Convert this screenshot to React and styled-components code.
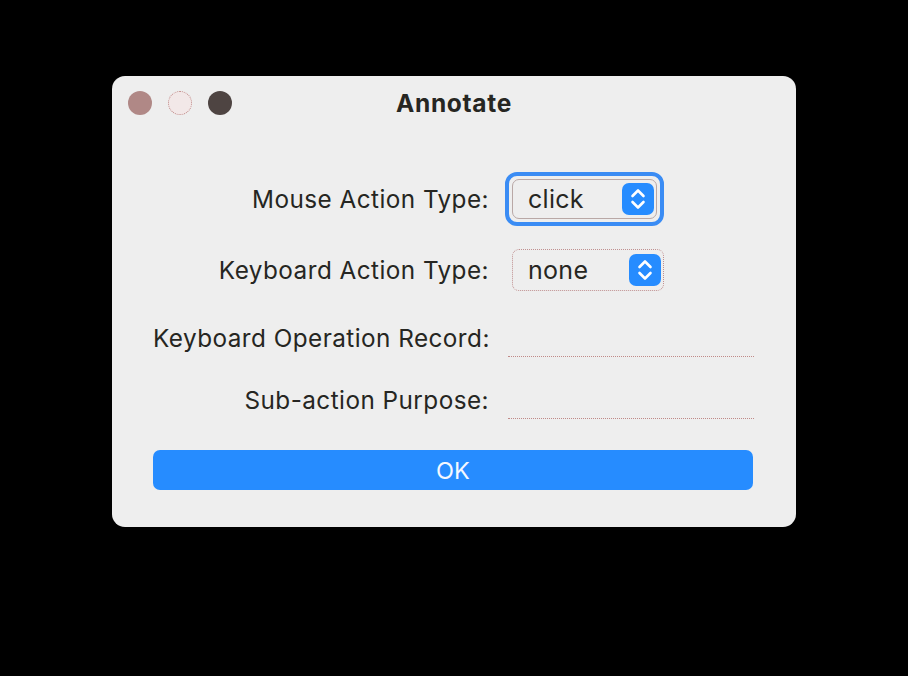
import React from 'react'
import styled, { createGlobalStyle } from 'styled-components'

const Global = createGlobalStyle`
  html, body { margin: 0; background: #000; }
  body { font-family: Inter, "Noto Sans", sans-serif; }
`

const Page = styled.div`
  width: 908px;
  height: 676px;
  padding: 76px 0 0 112px;
  box-sizing: border-box;
`

const Window = styled.div`
  width: 684px;
  height: 451px;
  background: #eeeeee;
  border-radius: 13px;
  box-sizing: border-box;
`

const TitleBar = styled.div`
  height: 54px;
  display: grid;
  grid-template-columns: 1fr auto 1fr;
  align-items: center;
  padding: 0 16px;
`

const Lights = styled.div`
  display: flex;
  gap: 16px;
`

const Light = styled.span`
  width: 24px;
  height: 24px;
  border-radius: 50%;
  box-sizing: border-box;
  background: ${p => p.$bg};
  border: ${p => p.$border || 'none'};
`

const Title = styled.div`
  font-size: 24.5px;
  font-weight: 700;
  color: #262622;
  letter-spacing: 0.7px;
`

const Body = styled.div`
  padding: 34px 43px 0 41px;
`

const Form = styled.div`
  display: grid;
  grid-template-columns: 336px 1fr;
  grid-template-rows: 70px 72px 64px 60px;
  column-gap: 16px;
  align-items: center;
`

const Label = styled.div`
  text-align: right;
  font-size: 24.3px;
  letter-spacing: 0.45px;
  color: #262622;
  white-space: nowrap;
`

const Ring = styled.div`
  width: 159px;
  height: 54px;
  box-sizing: border-box;
  border: 4px solid #3a8cf4;
  border-radius: 12px;
  padding: 3px;
`

const SelectBox = styled.div`
  display: flex;
  align-items: center;
  justify-content: space-between;
  box-sizing: border-box;
  height: ${p => (p.$focused ? '40px' : '42px')};
  width: ${p => (p.$focused ? '145px' : '152px')};
  margin-left: ${p => (p.$focused ? '0' : '7px')};
  border: 1px ${p => (p.$focused ? 'solid #b9a8a6' : 'dotted #c09090')};
  border-radius: 7px;
  padding: 0 2px 0 15px;
  font-size: 25px;
  letter-spacing: 0.3px;
  color: #262622;
`

const Stepper = styled.span`
  width: 32px;
  height: 32px;
  border-radius: 7px;
  background: #268cff;
  display: flex;
  align-items: center;
  justify-content: center;
`

const Field = styled.div`
  width: 246px;
  height: 36px;
  margin-left: 3px;
  border-bottom: 1px dotted #c08a88;
`

const OkButton = styled.button`
  display: block;
  width: 600px;
  height: 40px;
  margin-top: 20px;
  border: none;
  border-radius: 7px;
  background: #268cff;
  color: #f4f8ff;
  font-family: Inter, "Noto Sans", sans-serif;
  font-size: 23.5px;
`

function Chevrons() {
  return (
    <svg width="18" height="26" viewBox="0 0 18 26" fill="none" stroke="#fff" strokeWidth="2.6" strokeLinecap="round" strokeLinejoin="round">
      <path d="M3.5 10 L9 4.5 L14.5 10" />
      <path d="M3.5 16 L9 21.5 L14.5 16" />
    </svg>
  )
}

function Select({ value, focused }) {
  const box = (
    <SelectBox $focused={focused}>
      {value}
      <Stepper><Chevrons /></Stepper>
    </SelectBox>
  )
  return focused ? <Ring>{box}</Ring> : box
}

export default function App() {
  return (
    <Page>
      <Global />
      <Window>
        <TitleBar>
          <Lights>
            <Light $bg="#b08886" />
            <Light $bg="#f2e8e8" $border="1px dotted #c08a88" />
            <Light $bg="#4e4442" />
          </Lights>
          <Title>Annotate</Title>
          <span />
        </TitleBar>
        <Body>
          <Form>
            <Label>Mouse Action Type:</Label>
            <Select value="click" focused />
            <Label>Keyboard Action Type:</Label>
            <Select value="none" />
            <Label>Keyboard Operation Record:</Label>
            <Field />
            <Label>Sub-action Purpose:</Label>
            <Field />
          </Form>
          <OkButton>OK</OkButton>
        </Body>
      </Window>
    </Page>
  )
}
